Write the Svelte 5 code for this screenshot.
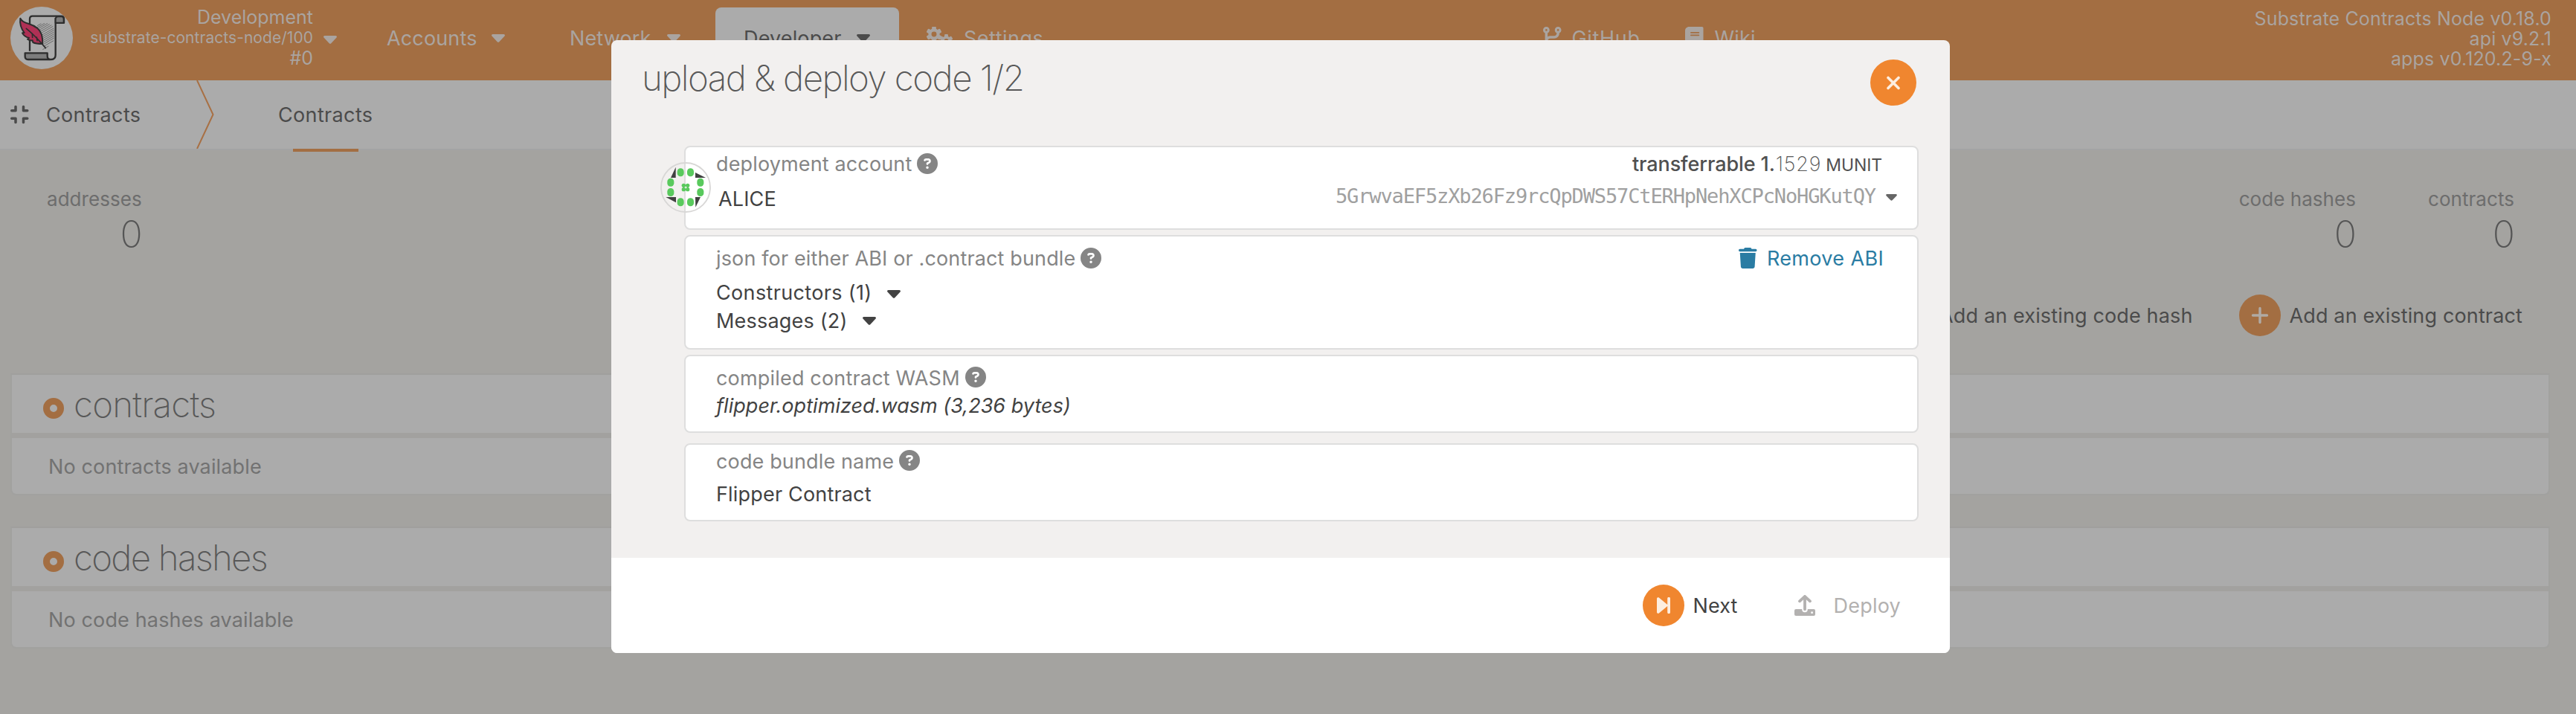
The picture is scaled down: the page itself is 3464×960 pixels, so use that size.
<script>
  const helpIcon = 'M256 512A256 256 0 1 0 256 0a256 256 0 1 0 0 512zM169.8 165.3c7.9-22.3 29.1-37.3 52.8-37.3h58.3c34.9 0 63.1 28.3 63.1 63.1c0 22.6-12.1 43.5-31.7 54.8L280 264.4c-.2 13-10.9 23.6-24 23.6c-13.3 0-24-10.7-24-24V250.5c0-8.6 4.6-16.5 12.1-20.8l44.3-25.4c4.7-2.7 7.6-7.7 7.6-13.1c0-8.4-6.8-15.1-15.1-15.1H222.6c-3.4 0-6.4 2.1-7.5 5.3l-.4 1.2c-4.4 12.5-18.2 19-30.6 14.6s-19-18.2-14.6-30.6l.4-1.2zM224 352a32 32 0 1 1 64 0 32 32 0 1 1 -64 0z';
  const teeth = [0, 60, 120, 180, 240, 300];
  const panels = [
    { title: 'contracts', empty: 'No contracts available' },
    { title: 'code hashes', empty: 'No code hashes available', tight: true }
  ];
</script>

{#snippet caret()}
  <svg class="caret" viewBox="0 0 18 11"><path d="M1.6 0h14.8c1.4 0 2.1 1.6 1.1 2.6l-7.2 7.6c-.7.8-1.9.8-2.6 0L.5 2.6C-.5 1.6.2 0 1.6 0z" /></svg>
{/snippet}

{#snippet help()}
  <svg class="help" viewBox="0 0 512 512"><path d={helpIcon} /></svg>
{/snippet}

{#snippet gear(cx, cy, r)}
  <g>
    {#each teeth as a}
      <rect x={cx - r * 0.27} y={cy - r} width={r * 0.54} height={r * 0.6} rx={r * 0.14} transform="rotate({a} {cx} {cy})" />
    {/each}
    <circle {cx} {cy} r={r * 0.53} fill="none" stroke="currentColor" stroke-width={r * 0.4} />
  </g>
{/snippet}

<div class="page">
  <header>
    <svg class="logo" viewBox="42 27 252 252">
      <circle cx="168" cy="153" r="126" fill="#ababab" />
      <g fill="none" stroke="#555" stroke-width="2.2">
        <path d="M150 104l16-9M148 112l32-18M150 118l42-24M154 124l46-27M158 130l50-29M162 136l52-30M166 143l51-29M168 150l50-29M170 157l48-28M174 163l44-26M176 170l42-25M178 177l40-24M180 185l36-21M172 200l24-14" />
      </g>
      <path d="M120 206V76q0-11 11-11h116q11 0 11 11v16h-30v-8M224 72v150q0 18-18 18" fill="none" stroke="#2d2d2d" stroke-width="7" stroke-linejoin="round" />
      <path d="M224 92V78q0-11 10-11h14q9 0 9 10v15z" fill="#7d7d7d" stroke="#2d2d2d" stroke-width="6" stroke-linejoin="round" />
      <path d="M101 214h90v12q0 14 13 14h-91q-12 0-12-12z" fill="#7d7d7d" stroke="#2d2d2d" stroke-width="7" stroke-linejoin="round" />
      <path d="M82 74c6 14 18 18 34 22 26 8 45 20 52 44 4 14 4 24 4 37-14 0-27 0-39-6l-2-8c-6 1-14-1-20-5l6-5c-12-3-22-10-27-20l8-1c-11-14-19-36-16-58z" fill="#b03055" stroke="#2d2d2d" stroke-width="6" stroke-linejoin="round" />
      <path d="M106 115c20 16 42 38 60 58l18 21M130 135l1 16M148 150l2 14" fill="none" stroke="#2d2d2d" stroke-width="5" stroke-linecap="round" />
    </svg>
    <div class="chain">
      <div>Development</div>
      <div class="node">substrate-contracts-node/100</div>
      <div class="best">#0</div>
    </div>
    <div class="chain-caret">{@render caret()}</div>
    <nav>
      <div class="item accounts">Accounts {@render caret()}</div>
      <div class="item network">Network {@render caret()}</div>
      <div class="item active">Developer {@render caret()}</div>
      <div class="item settings">
        <svg width="36" height="28" viewBox="0 0 36 28" fill="currentColor">{@render gear(10, 10, 10.5)}{@render gear(26.5, 19, 9)}</svg>
        <span>Settings</span>
      </div>
    </nav>
    <div class="item github">
      <svg width="24.5" height="28" viewBox="0 0 448 512" fill="currentColor"><path d="M80 104a24 24 0 1 0 0-48 24 24 0 1 0 0 48zm80-24c0 32.8-19.7 61-48 73.3v87.8c18.8-10.9 40.7-17.1 64-17.1h96c35.3 0 64-28.7 64-64v-6.7C307.7 141 288 112.8 288 80c0-44.2 35.8-80 80-80s80 35.8 80 80c0 32.8-19.7 61-48 73.3V160c0 70.7-57.3 128-128 128H176c-35.3 0-64 28.7-64 64v6.7c28.3 12.3 48 40.5 48 73.3c0 44.2-35.8 80-80 80s-80-35.8-80-80c0-32.8 19.7-61 48-73.3V352 153.3C19.7 141 0 112.8 0 80C0 35.8 35.8 0 80 0s80 35.8 80 80zm232 0a24 24 0 1 0 -48 0 24 24 0 1 0 48 0zM80 456a24 24 0 1 0 0-48 24 24 0 1 0 0 48z" /></svg>
      <span>GitHub</span>
    </div>
    <div class="item wiki">
      <svg width="24.5" height="28" viewBox="0 0 448 512" fill="currentColor"><path d="M96 0C43 0 0 43 0 96V416c0 53 43 96 96 96H384h32c17.7 0 32-14.3 32-32s-14.3-32-32-32V384c17.7 0 32-14.3 32-32V32c0-17.7-14.3-32-32-32H384 96zm0 384H352v64H96c-17.7 0-32-14.3-32-32s14.3-32 32-32zm32-240c0-8.8 7.2-16 16-16H336c8.8 0 16 7.2 16 16s-7.2 16-16 16H144c-8.8 0-16-7.2-16-16zm16 48H336c8.8 0 16 7.2 16 16s-7.2 16-16 16H144c-8.8 0-16-7.2-16-16s7.2-16 16-16z" /></svg>
      <span>Wiki</span>
    </div>
    <div class="versions">
      <div>Substrate Contracts Node v0.18.0</div>
      <div>api v9.2.1</div>
      <div>apps v0.120.2-9-x</div>
    </div>
  </header>

  <div class="tabs">
    <svg class="compress" viewBox="0 0 448 512"><path d="M160 64c0-17.7-14.3-32-32-32s-32 14.3-32 32v64H32c-17.7 0-32 14.3-32 32s14.3 32 32 32h96c17.7 0 32-14.3 32-32V64zM32 320c-17.7 0-32 14.3-32 32s14.3 32 32 32H96v64c0 17.7 14.3 32 32 32s32-14.3 32-32V352c0-17.7-14.3-32-32-32H32zM352 64c0-17.7-14.3-32-32-32s-32 14.3-32 32v96c0 17.7 14.3 32 32 32h96c17.7 0 32-14.3 32-32s-14.3-32-32-32H352V64zM320 320c-17.7 0-32 14.3-32 32v96c0 17.7 14.3 32 32 32s32-14.3 32-32V384h64c17.7 0 32-14.3 32-32s-14.3-32-32-32H320z" /></svg>
    <div class="crumb">Contracts</div>
    <svg class="chevron" viewBox="0 0 24 92"><path d="M1 0L22.5 46L1 92" /></svg>
    <div class="tab"><span>Contracts</span><i></i></div>
  </div>

  <main>
    <div class="stats">
      <div class="stat">addresses<b>0</b></div>
      <div class="stat hashes">code hashes<b>0</b></div>
      <div class="stat">contracts<b>0</b></div>
    </div>
    <div class="actions">
      <div class="add"><span class="plus"></span><span class="add-text">Add an existing code hash</span></div>
      <div class="add">
        <span class="plus"><svg width="24" height="24" viewBox="0 0 24 24"><path d="M12 2.5v19M2.5 12h19" /></svg></span><span class="add-text">Add an existing contract</span>
      </div>
    </div>
    {#each panels as p}
      <section>
        <div class="head"><span class="ring"></span><h2 class:tight={p.tight}>{p.title}</h2></div>
        <div class="empty">{p.empty}</div>
      </section>
    {/each}
  </main>
</div>

<div class="overlay">
  <div class="modal">
    <div class="top">
      <h1>upload &amp; deploy code 1/2</h1>
      <div class="close"><svg width="18" height="19" viewBox="0 0 18 19"><path d="M2 2.5l14 14M16 2.5l-14 14" /></svg></div>
    </div>
    <div class="cards">
      <div class="card account">
        <svg class="identicon" viewBox="24 24 204 204">
          <circle cx="126" cy="126" r="99" fill="none" stroke="#d8d7d6" stroke-width="5.5" />
          <g fill="#404040"><path d="M86 44v43H66z" /><path d="M165 66l42 21h-42z" /><path d="M46 165h41v22z" /><path d="M165 165h21l-20 41z" /></g>
          <g fill="#59c95d">
            <rect x="92" y="49" width="27" height="33" rx="13" /><rect x="132" y="49" width="27" height="33" rx="13" />
            <rect x="92" y="169" width="27" height="33" rx="13" /><rect x="132" y="169" width="27" height="33" rx="13" />
            <rect x="52" y="89" width="27" height="33" rx="13" /><rect x="52" y="129" width="27" height="33" rx="13" />
            <rect x="172" y="89" width="27" height="33" rx="13" /><rect x="172" y="129" width="27" height="33" rx="13" />
            <circle cx="118" cy="118" r="8" /><circle cx="134" cy="118" r="8" /><circle cx="118" cy="134" r="8" /><circle cx="134" cy="134" r="8" />
            <path d="M118 115h16v5h-16zM118 132h16v5h-16zM115 118h5v16h-5zM132 118h5v16h-5z" />
          </g>
        </svg>
        <div class="row">
          <span class="label">deployment account</span>{@render help()}
          <span class="balance">transferrable 1.<em>1529</em><small>MUNIT</small></span>
        </div>
        <div class="row second">
          <span class="name">ALICE</span>
          <span class="address">5GrwvaEF5zXb26Fz9rcQpDWS57CtERHpNehXCPcNoHGKutQY</span>
          {@render caret()}
        </div>
      </div>
      <div class="card abi">
        <div class="row">
          <span class="label">json for either ABI or .contract bundle</span>{@render help()}
          <span class="remove"><svg width="24.5" height="28" viewBox="0 0 448 512"><path d="M135.2 17.7L128 32H32C14.3 32 0 46.3 0 64S14.3 96 32 96H416c17.7 0 32-14.3 32-32s-14.3-32-32-32H320l-7.2-14.3C307.4 6.8 296.3 0 284.2 0H163.8c-12.1 0-23.2 6.8-28.6 17.7zM416 128H32L53.2 467c1.6 25.3 22.6 45 47.9 45H346.9c25.3 0 46.3-19.7 47.9-45L416 128z" /></svg>Remove ABI</span>
        </div>
        <div class="row ctor"><span>Constructors (1)</span>{@render caret()}</div>
        <div class="row msgs"><span>Messages (2)</span>{@render caret()}</div>
      </div>
      <div class="card wasm">
        <div class="row"><span class="label wide">compiled contract WASM</span>{@render help()}</div>
        <div class="row file">flipper.optimized.wasm (3,236 bytes)</div>
      </div>
      <div class="card bundle">
        <div class="row"><span class="label">code bundle name</span>{@render help()}</div>
        <div class="row value">Flipper Contract</div>
      </div>
    </div>
    <div class="footer">
      <div class="next"><svg width="18" height="22" viewBox="0 0 18 22"><path d="M0 2C0 .4 1.6-.3 2.8.6L14.2 10V1.8a1.9 1.9 0 0 1 3.8 0v18.4a1.9 1.9 0 0 1-3.8 0V12L2.8 21.4C1.6 22.3 0 21.600 0 20z" /></svg></div>
      <span class="next-text">Next</span>
      <svg class="up" width="28" height="28" viewBox="0 0 28 28">
        <path d="M2 19h24a2 2 0 0 1 2 2v5a2 2 0 0 1-2 2H2a2 2 0 0 1-2-2v-5a2 2 0 0 1 2-2z" fill="#b3b1b0" />
        <path d="M14 14v5.500" fill="none" stroke="#fff" stroke-width="7.5" stroke-linecap="round" />
        <path d="M14 2.200v17M7 8.300l7-6.500 7 6.500" fill="none" stroke="#b3b1b0" stroke-width="3.800" stroke-linecap="round" stroke-linejoin="round" />
        <circle cx="23.600" cy="23.700" r="1.400" fill="#fff" />
      </svg>
      <span class="deploy-text">Deploy</span>
    </div>
  </div>
</div>

<style>
  :global(body) { background: #a4a3a0; overflow: hidden; }
  .page, .overlay { font: 400 27px/36px Inter, sans-serif; letter-spacing: .14px; white-space: nowrap; width: 3464px; height: 960px; box-sizing: border-box; }
  .page { background: #a4a3a0; color: #4b4b4b; overflow: hidden; }
  svg { display: block; flex: none; }
  .caret { width: 18px; height: 11px; fill: currentColor; }

  header { display: flex; align-items: flex-start; height: 108px; background: #a36e42; color: #aaa4a0; }
  .logo { width: 84px; height: 84px; margin: 9px 0 0 14px; }
  .chain { width: 323px; padding-top: 10px; text-align: right; font-size: 25px; line-height: 27px; letter-spacing: 0; }
  .node { font-size: 21px; letter-spacing: .05px; }
  .best { margin-top: 1px; }
  .chain-caret { margin: 48px 0 0 14px; }
  nav { display: flex; width: 1622px; }
  .item { display: flex; margin-top: 34px; }
  .item .caret { margin-top: 12px; }
  .accounts { width: 247px; padding-left: 67px; box-sizing: border-box; gap: 19px; }
  .network { width: 262px; padding-left: 66px; box-sizing: border-box; gap: 21px; }
  .active { width: 247px; height: 98px; margin-top: 10px; padding: 24px 0 0 38px; box-sizing: border-box; gap: 20px; background: #ababab; color: #4b4b4b; border-radius: 8px 8px 0 0; }
  .settings { padding-left: 37px; gap: 14px; letter-spacing: .5px; }
  .settings svg, .github svg, .wiki svg { margin-top: 2px; }
  .github { width: 191px; gap: 14px; letter-spacing: .69px; }
  .wiki { gap: 15px; }
  .versions { margin-left: auto; padding: 12px 33px 0 0; text-align: right; font-size: 25px; line-height: 27px; }

  .tabs { display: flex; height: 92px; background: #ababab; border-bottom: 2px solid #a2a3a4; letter-spacing: .35px; }
  .compress { width: 24.5px; height: 28px; margin: 32px 23.5px 0 14px; fill: #4b4b4b; }
  .crumb { width: 202px; padding-top: 29px; }
  .chevron { width: 24px; height: 92px; }
  .chevron path { fill: none; stroke: #a87044; stroke-width: 2; }
  .tab { display: flex; flex-direction: column; align-items: center; justify-content: space-between; height: 96px; margin-left: 86px; }
  .tab span { padding-top: 29px; }
  .tab i { width: 88px; height: 4px; background: #a36e42; }

  .stats { display: flex; justify-content: space-between; height: 146px; padding: 48px 83px 0 63px; box-sizing: border-box; color: #6d6d6d; font-size: 26px; letter-spacing: .05px; }
  .hashes { margin-left: auto; margin-right: 97px; }
  .stat b { display: block; margin: 1px -1px 0 0; text-align: right; font-size: 50px; line-height: 57px; font-weight: 200; color: #555; }
  .actions { display: flex; justify-content: flex-end; gap: 62px; height: 106px; padding: 48px 72px 0 0; box-sizing: border-box; }
  .add { display: flex; gap: 12px; height: 56px; }
  .add-text { padding-top: 11px; }
  .plus { display: grid; place-items: center; width: 56px; height: 56px; border-radius: 50%; background: #a36e42; }
  .plus path { stroke: #b0aaa4; stroke-width: 3.4; stroke-linecap: round; }

  main { display: flex; flex-direction: column; }
  section { width: 3415px; height: 164px; margin: 0 0 42px 14px; border: 2px solid #a1a19f; border-top-color: #a09f9d; border-radius: 0 0 8px 8px; box-sizing: border-box; }
  .actions + section { margin-top: 48px; }
  .head { display: flex; height: 78px; background: #ababab; border-bottom: 7px solid #a2a19f; }
  .ring { width: 28px; height: 28px; margin: 31px 0 0 42px; border: 9px solid #a36e42; border-radius: 50%; box-sizing: border-box; }
  h2, h1 { margin: 0; font-size: 47.5px; line-height: 57px; font-weight: 200; letter-spacing: -.82px; color: #585858; }
  h2 { margin: 11px 0 0 13px; }
  h2.tight { letter-spacing: -1.75px; }
  .empty { height: 75px; padding: 21px 0 0 49px; box-sizing: border-box; background: #ababab; color: #727272; border-radius: 0 0 6px 6px; }

  .overlay { position: absolute; left: 0; top: 0; display: flex; justify-content: center; align-items: flex-start; padding: 54px 842px 0 822px; color: #424242; }
  .modal { display: flex; flex-direction: column; width: 1800px; height: 824px; background: #f2f0ef; border-radius: 8px; overflow: hidden; }
  .top { display: flex; justify-content: space-between; height: 142px; padding: 0 45px 0 41px; box-sizing: border-box; }
  h1 { margin-top: 22px; letter-spacing: -1.54px; }
  .close { display: grid; place-items: center; width: 62px; height: 62px; margin-top: 26px; border-radius: 50%; background: #f0862f; }
  .close path { fill: none; stroke: #fdeee0; stroke-width: 3.6; stroke-linecap: round; }
  .cards { padding-left: 98px; height: 554px; }
  .card { position: relative; width: 1660px; box-sizing: border-box; padding: 5px 47px 0 41px; background: #fff; border: 2px solid #dedede; border-radius: 8px; }
  .row { display: flex; height: 34px; }
  .label { color: #858585; margin-right: 7px; }
  .wide { letter-spacing: .18px; }
  .help { width: 28px; height: 28px; margin-top: 3px; fill: #858585; }
  .account { height: 113px; }
  .identicon { position: absolute; left: -34px; top: 20px; width: 68px; height: 68px; }
  .balance { margin-left: auto; font-weight: 500; letter-spacing: -.1px; color: #505050; }
  .balance em { margin-left: 1px; font-style: normal; font-weight: 200; letter-spacing: .8px; color: #555; }
  .balance small { margin-left: 6px; font-size: 23px; font-weight: 400; }
  .second { margin-top: 13px; margin-right: -20px; }
  .name { margin-left: 3px; }
  .address { margin: -4px 14px 0 auto; font-family: "DejaVu Sans Mono", monospace; letter-spacing: -1.13px; color: #a0a0a0; }
  .second .caret { width: 15px; height: 9px; margin-top: 11px; color: #666; }
  .abi { height: 154px; margin-top: 7px; padding-top: 12px; padding-right: 45px; }
  .remove { display: flex; gap: 13px; margin-left: auto; color: #2a7ca3; letter-spacing: .35px; }
  .remove svg { margin-top: 3px; fill: currentColor; }
  .ctor { margin-top: 12px; gap: 20px; letter-spacing: .35px; }
  .msgs { margin-top: 4px; gap: 20px; letter-spacing: .2px; }
  .ctor .caret { margin-top: 14px; }
  .msgs .caret { margin-top: 12px; }
  .wasm { height: 105px; margin-top: 7px; padding-top: 12px; }
  .file { margin-top: 3px; font-style: italic; letter-spacing: .04px; }
  .bundle { height: 105px; margin-top: 14px; }
  .value { margin-top: 10px; letter-spacing: .18px; }
  .wasm .help, .bundle .help { margin-top: 2px; }
  .footer { display: flex; justify-content: flex-end; height: 128px; padding: 36px 66px 0 0; box-sizing: border-box; background: #fff; }
  .next { display: grid; place-items: center; width: 56px; height: 56px; border-radius: 50%; background: #f0862f; }
  .next svg { fill: #fdeee0; }
  .next-text { margin: 11px 76px 0 11px; }
  .up { margin: 14px 25px 0 0; }
  .deploy-text { margin-top: 11px; color: #b3b1b0; letter-spacing: .21px; }
</style>
